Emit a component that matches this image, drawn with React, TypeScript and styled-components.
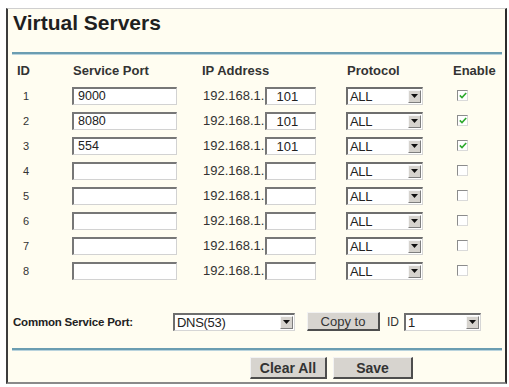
import React from "react";
import styled, { createGlobalStyle } from "styled-components";

const GlobalStyle = createGlobalStyle`
  html, body { margin: 0; padding: 0; background: #ffffff; }
  body { font-family: "Liberation Sans", Arial, sans-serif; color: #333; }
  * { box-sizing: border-box; }
`;

const Frame = styled.div`
  margin: 8px 0 0 6px;
  width: 501px;
  background: #fffdf1;
  border-top: 1px solid #cfcfcf;
  border-left: 2px solid #3c3c3c;
  border-right: 2px solid #2c2c2c;
  border-bottom: 2px solid #8a8a8a;
  padding-bottom: 3px;
`;

const Title = styled.h1`
  margin: 2px 0 0 5px;
  font-size: 21px;
  line-height: 24px;
  font-weight: 700;
  color: #1f1f1f;
`;

const Rule = styled.div<{ $top: number }>`
  height: 2px;
  margin: ${(p) => p.$top}px 3px 0 4px;
  background: #6b9db1;
  box-shadow: 0 1px 0 #b9d3dd;
`;

const Table = styled.div`
  display: grid;
  grid-template-columns: 55px 130px 144px 107px 1fr;
  grid-auto-rows: 25px;
  align-items: center;
  margin-top: 4px;
  padding-left: 9px;
`;

const Head = styled.div<{ $pad?: number }>`
  font-size: 13px;
  font-weight: 700;
  color: #333;
  padding-left: ${(p) => p.$pad ?? 0}px;
`;

const IdCell = styled.div`
  font-size: 11px;
  color: #333;
  padding-left: 6px;
`;

const TextBox = styled.input<{ $w: number; $pad: number; $fs: number }>`
  width: ${(p) => p.$w}px;
  height: 18px;
  margin: 0;
  padding: 0 0 0 ${(p) => p.$pad}px;
  background: #ffffff;
  border-top: 2px solid #777;
  border-left: 2px solid #777;
  border-right: 1px solid #d2d2d2;
  border-bottom: 1px solid #d2d2d2;
  font-family: "Liberation Sans", Arial, sans-serif;
  font-size: ${(p) => p.$fs}px;
  color: #222;
  outline: none;
`;

const IpCell = styled.div`
  display: flex;
  align-items: center;
`;

const IpPrefix = styled.span`
  margin-left: 1px;
  margin-right: 1px;
  font-size: 13px;
  color: #333;
`;

const SelectBox = styled.div<{ $w: number }>`
  width: ${(p) => p.$w}px;
  height: 18px;
  display: flex;
  align-items: stretch;
  background: #ffffff;
  border-top: 2px solid #6e6e6e;
  border-left: 2px solid #6e6e6e;
  border-right: 1px solid #d6d6d6;
  border-bottom: 1px solid #d6d6d6;
`;

const SelectText = styled.span`
  flex: 1;
  padding-left: 2px;
  font-size: 13px;
  line-height: 15px;
  color: #222;
  letter-spacing: -0.3px;
`;

const ArrowBox = styled.span`
  width: 13px;
  margin: 1px 1px 1px 0;
  display: flex;
  align-items: center;
  justify-content: center;
  background: #d6d3ce;
  border-top: 1px solid #f6f6f6;
  border-left: 1px solid #f6f6f6;
  border-right: 1px solid #7e7e7e;
  border-bottom: 1px solid #7e7e7e;
`;

const CheckBox = styled.span`
  width: 11px;
  height: 11px;
  margin-left: 4px;
  display: flex;
  align-items: center;
  justify-content: center;
  background: #ffffff;
  border-top: 1px solid #8c8c8c;
  border-left: 1px solid #8c8c8c;
  border-right: 1px solid #dadada;
  border-bottom: 1px solid #dadada;
`;

const CommonRow = styled.div`
  display: flex;
  align-items: center;
  height: 25px;
  margin-top: 26px;
`;

const CommonLabel = styled.span`
  width: 165px;
  padding-left: 5px;
  font-size: 11.5px;
  font-weight: 700;
  color: #222;
  letter-spacing: -0.2px;
`;

const Button = styled.button<{ $w: number; $h: number; $bold?: boolean; $ml?: number }>`
  width: ${(p) => p.$w}px;
  height: ${(p) => p.$h}px;
  margin: 0 0 0 ${(p) => p.$ml ?? 0}px;
  padding: 0;
  background: #d7d4cf;
  border-top: 1px solid #f2f2f2;
  border-left: 1px solid #f2f2f2;
  border-right: 2px solid #4d4d4d;
  border-bottom: 2px solid #4d4d4d;
  font-family: "Liberation Sans", Arial, sans-serif;
  font-size: ${(p) => (p.$bold ? 14 : 13)}px;
  font-weight: ${(p) => (p.$bold ? 700 : 400)};
  color: #333;
`;

const SmallLabel = styled.span`
  margin-left: 7px;
  margin-right: 5px;
  font-size: 12px;
  color: #333;
`;

const ButtonRow = styled.div`
  display: flex;
  gap: 6px;
  margin-top: 7px;
  padding-left: 242px;
`;

const Arrow = () => (
  <ArrowBox>
    <svg width="7" height="4" viewBox="0 0 7 4">
      <path d="M0 0 H7 L3.5 4 Z" fill="#111" />
    </svg>
  </ArrowBox>
);

const Select = ({ w, value }: { w: number; value: string }) => (
  <SelectBox $w={w}>
    <SelectText>{value}</SelectText>
    <Arrow />
  </SelectBox>
);

const Check = ({ on }: { on: boolean }) => (
  <CheckBox>
    {on && (
      <svg width="8" height="7" viewBox="0 0 8 7">
        <path d="M0.8 3.4 L3 5.6 L7.2 1" fill="none" stroke="#2faa2f" strokeWidth="1.6" />
      </svg>
    )}
  </CheckBox>
);

const rows = [
  { id: 1, port: "9000", ip: "101", on: true },
  { id: 2, port: "8080", ip: "101", on: true },
  { id: 3, port: "554", ip: "101", on: true },
  { id: 4, port: "", ip: "", on: false },
  { id: 5, port: "", ip: "", on: false },
  { id: 6, port: "", ip: "", on: false },
  { id: 7, port: "", ip: "", on: false },
  { id: 8, port: "", ip: "", on: false },
];

export default function App() {
  return (
    <>
      <GlobalStyle />
      <Frame>
        <Title>Virtual Servers</Title>
        <Rule $top={17} />
        <Table>
          <Head>ID</Head>
          <Head $pad={1}>Service Port</Head>
          <Head>IP Address</Head>
          <Head $pad={1}>Protocol</Head>
          <Head>Enable</Head>
          {rows.map((r) => (
            <React.Fragment key={r.id}>
              <IdCell>{r.id}</IdCell>
              <div>
                <TextBox $w={105} $pad={4} $fs={12.5} defaultValue={r.port} readOnly />
              </div>
              <IpCell>
                <IpPrefix>192.168.1.</IpPrefix>
                <TextBox $w={51} $pad={9} $fs={13} defaultValue={r.ip} readOnly />
              </IpCell>
              <div>
                <Select w={77} value="ALL" />
              </div>
              <div>
                <Check on={r.on} />
              </div>
            </React.Fragment>
          ))}
        </Table>
        <CommonRow>
          <CommonLabel>Common Service Port:</CommonLabel>
          <Select w={122} value="DNS(53)" />
          <Button $w={73} $h={19} $ml={12}>Copy to</Button>
          <SmallLabel>ID</SmallLabel>
          <Select w={77} value="1" />
        </CommonRow>
        <Rule $top={14} />
        <ButtonRow>
          <Button $w={77} $h={22} $bold>Clear All</Button>
          <Button $w={80} $h={22} $bold>Save</Button>
        </ButtonRow>
      </Frame>
    </>
  );
}
